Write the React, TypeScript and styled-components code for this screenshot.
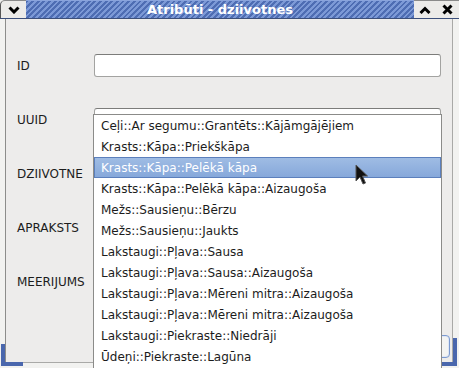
import { Fragment } from 'react';
import styled, { createGlobalStyle } from 'styled-components';

const Global = createGlobalStyle`
  html, body {
    margin: 0;
    padding: 0;
    background: #ffffff;
  }
  body {
    font-family: "DejaVu Sans", "Liberation Sans", sans-serif;
  }
`;

const Window = styled.div`
  position: relative;
  width: 459px;
  height: 368px;
  overflow: hidden;
  display: flex;
  flex-direction: column;
  background: #eeeeec;
`;

const TitleBar = styled.div`
  display: flex;
  height: 19px;
  border-bottom: 1px solid #3c4f7a;
  box-sizing: border-box;
`;

const TitleButton = styled.div<{ $w: number; $left?: boolean }>`
  width: ${(p) => p.$w}px;
  display: flex;
  align-items: center;
  justify-content: center;
  background: #ecebe9;
  border-top: 1px solid #8a8a8a;
  ${(p) => (p.$left ? 'border-left: 1px solid #555; border-top-left-radius: 5px;' : '')}
  box-sizing: border-box;
`;

const TitleStripe = styled.div`
  flex: 1;
  display: flex;
  align-items: center;
  justify-content: center;
  background: repeating-linear-gradient(
    135deg,
    #4e6db3 0px,
    #4e6db3 2px,
    #7c99d6 2px,
    #7c99d6 4px
  );
  border-top: 1px solid #8aa4dc;
  color: #ffffff;
  font-weight: bold;
  font-size: 13px;
`;

const Frame = styled.div`
  flex: 1;
  display: flex;
  padding: 0 6px 5px 5px;
  background: #f2f2f0;
`;

const Content = styled.div`
  flex: 1;
  display: flex;
  flex-direction: column;
  background: #edeceb;
  border-left: 1px solid #8d8d8b;
  border-right: 1px solid #a9a9a7;
  border-bottom: 1px solid #a9a9a7;
  padding: 19px 11px 0 11px;
`;

const Form = styled.div`
  display: grid;
  grid-template-columns: 77px 1fr;
  grid-auto-rows: 54px;
  align-items: center;
`;

const Label = styled.div`
  font-size: 12px;
  color: #1c1c1c;
  padding-top: 2px;
`;

const Input = styled.div`
  height: 23px;
  box-sizing: border-box;
  background: #ffffff;
  border: 1px solid #a3a3a1;
  border-top-color: #7c7c7a;
  border-radius: 3px;
`;

const ButtonRow = styled.div`
  display: flex;
  justify-content: flex-end;
  margin-top: 27px;
  margin-right: -9px;
`;

const Button = styled.div`
  width: 84px;
  height: 23px;
  box-sizing: border-box;
  border: 1px solid #7b99cf;
  border-radius: 4px;
  background: #f4f4f2;
  box-shadow: inset 0 0 0 1px #dfe7f5;
`;

const Corner = styled.div<{ $side: 'left' | 'right' }>`
  position: absolute;
  bottom: 2px;
  ${(p) => (p.$side === 'left' ? 'left: 1px; border-left: 4px solid #4a67ad;' : 'right: 2px; border-right: 4px solid #4a67ad;')}
  width: ${(p) => (p.$side === 'left' ? 18 : 12)}px;
  height: ${(p) => (p.$side === 'left' ? 18 : 24)}px;
  border-bottom: 4px solid #4a67ad;
`;

const Popup = styled.div`
  position: absolute;
  left: 93px;
  top: 114px;
  width: 349px;
  height: 260px;
  box-sizing: border-box;
  background: #ffffff;
  border: 1px solid #8b8b89;
  overflow: hidden;
`;

const Item = styled.div<{ $active?: boolean }>`
  height: 21px;
  box-sizing: border-box;
  display: flex;
  align-items: center;
  padding-left: 6px;
  font-size: 12px;
  white-space: nowrap;
  color: ${(p) => (p.$active ? '#ffffff' : '#1c1c1c')};
  background: ${(p) =>
    p.$active ? 'linear-gradient(#9fbce4, #86a8da)' : 'transparent'};
  border: 1px solid ${(p) => (p.$active ? '#5b7fbc' : 'transparent')};
`;

const Cursor = styled.svg`
  position: absolute;
  left: 355px;
  top: 164px;
`;

const items = [
  'Ceļi::Ar segumu::Grantēts::Kājāmgājējiem',
  'Krasts::Kāpa::Priekškāpa',
  'Krasts::Kāpa::Pelēkā kāpa',
  'Krasts::Kāpa::Pelēkā kāpa::Aizaugoša',
  'Mežs::Sausieņu::Bērzu',
  'Mežs::Sausieņu::Jaukts',
  'Lakstaugi::Pļava::Sausa',
  'Lakstaugi::Pļava::Sausa::Aizaugoša',
  'Lakstaugi::Pļava::Mēreni mitra::Aizaugoša',
  'Lakstaugi::Pļava::Mēreni mitra::Aizaugoša',
  'Lakstaugi::Piekraste::Niedrāji',
  'Ūdeņi::Piekraste::Lagūna',
];

const labels = ['ID', 'UUID', 'DZIIVOTNE', 'APRAKSTS', 'MEERIJUMS'];

function Chevron({ up }: { up?: boolean }) {
  return (
    <svg width="12" height="8" viewBox="0 0 12 8">
      <polyline
        points={up ? '1.5,7 6,2.5 10.5,7' : '1.5,1.5 6,6 10.5,1.5'}
        fill="none"
        stroke="#000"
        strokeWidth="3"
      />
    </svg>
  );
}

function CloseIcon() {
  return (
    <svg width="11" height="11" viewBox="0 0 11 11">
      <path d="M1.5 1.5 L9.5 9.5 M9.5 1.5 L1.5 9.5" stroke="#000" strokeWidth="3" />
    </svg>
  );
}

export default function App() {
  return (
    <>
      <Global />
      <Window>
        <TitleBar>
          <TitleButton $w={26} $left>
            <Chevron />
          </TitleButton>
          <TitleStripe>Atribūti - dziivotnes</TitleStripe>
          <TitleButton $w={22}>
            <Chevron up />
          </TitleButton>
          <TitleButton $w={23}>
            <CloseIcon />
          </TitleButton>
        </TitleBar>
        <Frame>
          <Content>
            <Form>
              {labels.map((l) => (
                <Fragment key={l}>
                  <Label>{l}</Label>
                  <Input />
                </Fragment>
              ))}
            </Form>
            <ButtonRow>
              <Button />
            </ButtonRow>
          </Content>
        </Frame>
        <Corner $side="left" />
        <Corner $side="right" />
        <Popup>
          {items.map((t, i) => (
            <Item key={i} $active={i === 2}>
              {t}
            </Item>
          ))}
        </Popup>
        <Cursor width="13" height="21" viewBox="0 0 13 21">
          <path
            d="M1 1 L1 17 L5 13 L8 20 L10.5 19 L7.5 12 L12.5 12 Z"
            fill="#111"
            stroke="#555"
            strokeWidth="1"
            strokeLinejoin="round"
          />
        </Cursor>
      </Window>
    </>
  );
}
